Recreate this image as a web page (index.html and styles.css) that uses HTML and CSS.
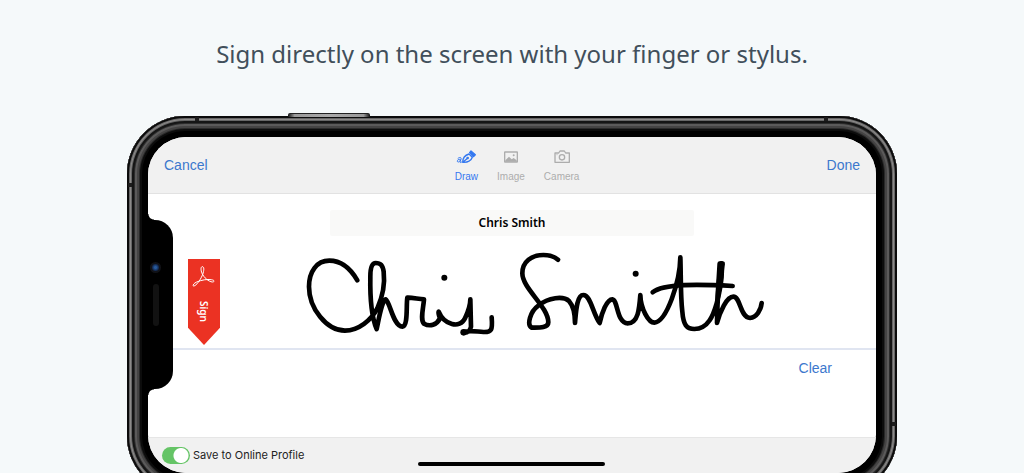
FILE: index.html
```html
<!DOCTYPE html>
<html lang="en">
<head>
<meta charset="utf-8">
<title>Sign on screen</title>
<link rel="stylesheet" href="styles.css">
</head>
<body>
<main class="slide">
  <h1 class="headline">Sign directly on the screen with your finger or stylus.</h1>
  <div class="phone">
    <span class="side-button"></span>
    <span class="seam seam-top-left"></span>
    <span class="seam seam-top-right"></span>
    <span class="seam seam-left"></span>
    <span class="seam seam-right"></span>
    <div class="screen">
      <header class="toolbar">
        <button class="link" type="button">Cancel</button>
        <nav class="modes">
          <button class="mode mode-active" type="button">
            <svg width="20" height="16" viewBox="0 0 60 48" fill="none" stroke="currentColor" stroke-width="4" stroke-linecap="round" stroke-linejoin="round"><path d="M6 28c6-5 11-3 9 3l-3 8c0 3 3 2 6-1M13 31c-6-1-9 2-9 6 1 4 7 2 9-3" stroke-width="3"/><path d="M20 40c0-13 6-21 19-25l10 10c-4 11-13 16-29 15zM21 39l12-10"/><circle cx="35" cy="27" r="2"/><path d="M41 11l4-5 13 11-6 6z" fill="currentColor"/></svg>
            <span>Draw</span>
          </button>
          <button class="mode" type="button">
            <svg width="20" height="16" viewBox="0 0 60 48" fill="none" stroke="currentColor" stroke-width="4" stroke-linejoin="round"><rect x="11" y="9" width="38" height="30" rx="1"/><path d="M13 34l11-11 8 8 6-4 9 7v4H13z" fill="currentColor" stroke="none"/><circle cx="38" cy="19" r="3" fill="currentColor" stroke="none"/></svg>
            <span>Image</span>
          </button>
          <button class="mode" type="button">
            <svg width="20" height="16" viewBox="0 0 60 48" fill="none" stroke="currentColor" stroke-width="4" stroke-linejoin="round"><path d="M9 12h11l4-6h13l4 6h11v28H9z"/><circle cx="30" cy="25" r="8" stroke-width="4"/><path d="M13 17h4" stroke-width="2"/></svg>
            <span>Camera</span>
          </button>
        </nav>
        <button class="link" type="button">Done</button>
      </header>
      <section class="canvas">
        <input class="name" type="text" value="Chris Smith" aria-label="Name">
        <div class="signing">
          <div class="flag">
            <svg width="24" height="24" viewBox="0 0 72 72" fill="none" stroke="#fff" stroke-width="3" stroke-linejoin="round"><path d="M31 5c7 0 5 15-1 28C23 48 13 61 6 63c-6 1-2-8 8-12 14-6 32-9 44-7 12 2 9 7 3 7-11-1-25-13-31-26-4-10-4-20 1-20z"/></svg>
            <span class="flag-text">Sign</span>
          </div>
          <svg class="signature" viewBox="0 0 1572 300" role="img" aria-label="Chris Smith signature" fill="none" stroke="#000" stroke-width="14" stroke-linecap="round" stroke-linejoin="round">
            <g transform="translate(120 0)">
              <path d="M202 106C180 68 150 47 118 47C80 47 57 80 57 125C57 190 110 257 165 257C205 257 245 225 262 190C280 150 285 115 281 80C278 60 272 54 257 54C245 54 241 70 241 95C240 150 242 210 260 252C268 215 275 170 287 163C300 170 310 245 337 245C355 243 348 180 352 158C365 157 385 162 402 163C400 190 390 225 402 236C420 246 440 240 450 220C446 210 444 205 446 200C462 240 510 252 525 220C537 195 541 180 541 163L543 245C540 258 532 264 522 262C535 254 560 260 580 261C605 262 608 255 605 217"/>
              <circle cx="463" cy="98" r="9" fill="#000" stroke="none"/>
              <circle cx="521" cy="262" r="10" fill="#000" stroke="none"/>
            </g>
            <g transform="translate(750 0)">
              <path d="M174 44C160 32 145 30 130 30C95 30 67 50 67 85C67 130 145 185 145 232C145 250 115 248 95 248C80 240 90 200 115 182C145 157 190 152 207 168C222 185 225 210 225 234C228 200 230 150 250 150C272 150 278 205 299 234C305 205 320 163 337 163C354 165 350 235 383 235C415 235 418 190 421 150C422 190 445 233 463 233C500 230 540 110 541 37C543 80 541 150 547 200C550 240 560 252 583 252C625 252 640 210 650 175C662 130 669 90 664 55C656 100 652 180 651 234C660 200 680 155 700 155C722 155 720 218 750 219C770 217 783 195 785 174"/>
              <path d="M458 142C490 115 600 118 698 123"/>
              <path d="M659 56L652 170L668 56Z" fill="#000"/>
              <circle cx="407" cy="86" r="9" fill="#000" stroke="none"/>
            </g>
          </svg>
        </div>
      </section>
      <div class="actions"><button class="link" type="button">Clear</button></div>
      <footer class="footer">
        <label class="save"><input class="toggle" type="checkbox" checked>Save to Online Profile</label>
      </footer>
      <span class="home-bar"></span>
    </div>
    <div class="notch"><span class="lens"></span><span class="speaker"></span></div>
  </div>
</main>
</body>
</html>
```
FILE: styles.css
```css
* { box-sizing: border-box; }
html, body { margin: 0; height: 100%; }
body { background: #f5f9fa; font-family: Inter, "Liberation Sans", sans-serif; overflow: hidden; }
button { border: 0; padding: 0; background: none; font: inherit; cursor: pointer; }

.slide { height: 100%; overflow: hidden; }
.headline { margin: 0; padding: 34px 16px 42px; text-align: center; font: 400 24px/40px "Noto Sans", "Open Sans", sans-serif; color: #414f5a; }

.phone {
  position: relative;
  max-width: 770px;
  margin: 0 auto;
  padding: 21px;
  border-radius: 58px;
  background: #000;
  box-shadow: inset 0 0 0 2px #0b0b0b, inset 0 0 0 3px #666, inset 0 0 0 4px #8d8b8a, inset 0 0 0 5px #666, inset 0 0 0 7px #151515, inset 0 0 0 8px #2d2d2d, inset 0 0 0 10px #5b5a5a, inset 0 0 0 12px #454444, inset 0 0 0 13px #292929, inset 0 0 0 15px #0c0c0c;
}
.side-button { position: absolute; left: 161px; top: -3px; width: 82px; height: 4px; border-radius: 2px 2px 0 0; background: linear-gradient(90deg, #111, #999 8%, #aaa 50%, #999 92%, #111); border-top: 1px solid #222; }
.seam { position: absolute; background: #1c1c1c; }
.seam-top-left, .seam-top-right { top: 1px; width: 4px; height: 4px; }
.seam-top-left { left: 68px; }
.seam-top-right { right: 69px; }
.seam-left, .seam-right { width: 4px; height: 4px; }
.seam-left { left: 1px; top: 67px; }
.seam-right { right: 1px; top: 306px; }

.screen { position: relative; display: flex; flex-direction: column; border-radius: 38px; overflow: hidden; background: #fff; }
.toolbar { display: flex; justify-content: space-between; align-items: center; height: 57px; padding: 0 16px; background: #f1f1f1; border-bottom: 1px solid #e2e2e2; }
.link { font: 14px/20px "Liberation Sans", sans-serif; color: #3c78cd; }
.modes { display: flex; gap: 19px; padding-top: 2px; }
.mode { display: flex; flex-direction: column; align-items: center; gap: 5px; font: 10px/14px "Liberation Sans", sans-serif; color: #adadad; }
.mode-active { color: #3478f0; }

.canvas { display: flex; flex-direction: column; align-items: center; padding-top: 16px; border-bottom: 2px solid #e0e5f1; }
.name { width: 50%; height: 26px; border: 0; border-radius: 2px; padding: 0 0 2px; background: #f9f9f8; text-align: center; font: 600 12px "Noto Sans", "Open Sans", sans-serif; color: #000; }
.signing { display: grid; grid-template-columns: 32px 1fr 32px; align-self: stretch; align-items: start; padding: 9px 40px 3px; }
.flag { display: flex; flex-direction: column; align-items: center; gap: 12px; height: 86px; margin-top: 14px; padding-top: 6px; background: #eb3223; clip-path: polygon(0 0, 100% 0, 100% 80%, 50% 100%, 0 80%); }
.flag-text { writing-mode: vertical-rl; font: 600 10px/12px "Noto Sans", sans-serif; color: #fff; }
.signature { justify-self: center; width: 100%; max-width: 524px; }

.actions { display: flex; justify-content: flex-end; padding: 8px 44px 59px; }
.footer { height: 36px; padding: 9px 14px; background: #f1f1f1; border-top: 1px solid #e6e6e6; }
.save { display: flex; align-items: center; gap: 3px; width: max-content; font-size: 11px; line-height: 17px; color: #222; }
.toggle { appearance: none; width: 28px; height: 17px; margin: 0; border-radius: 9px; background: radial-gradient(circle at 19px 50%, #fff 7px, #65c466 8px); }
.home-bar { position: absolute; left: 50%; bottom: 7px; width: 187px; height: 4px; margin-left: -94px; border-radius: 2px; background: #000; }

.notch { position: absolute; left: 20px; top: 104px; width: 26px; height: 169px; border-radius: 0 18px 18px 0; background: #000; }
.notch::before, .notch::after { content: ""; position: absolute; left: 1px; width: 6px; height: 6px; }
.notch::before { top: -6px; background: radial-gradient(circle at 100% 0, transparent 5px, #000 6px); }
.notch::after { bottom: -6px; background: radial-gradient(circle at 100% 100%, transparent 5px, #000 6px); }
.lens { position: absolute; left: 3px; top: 42px; width: 11px; height: 11px; border-radius: 50%; background: radial-gradient(circle, #285a9c 1px, #142c55 3px, #111217 4px); }
.speaker { position: absolute; left: 6px; top: 64px; width: 6px; height: 42px; border-radius: 3px; background: #121212; }
```
